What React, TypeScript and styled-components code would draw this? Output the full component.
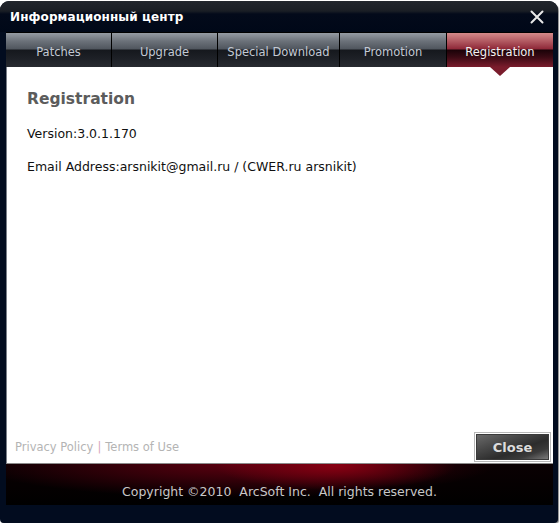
import React from "react";
import styled, { createGlobalStyle } from "styled-components";

const Global = createGlobalStyle`
  html, body { margin: 0; padding: 0; background: #ffffff; }
  body { font-family: "DejaVu Sans", Tahoma, sans-serif; }
`;

const Window = styled.div`
  width: 558px;
  height: 522px;
  margin: 1px 0 0 0;
  background: #020c1f;
  border-radius: 9px 9px 4px 4px;
  display: flex;
  flex-direction: column;
  box-shadow: 1px 1px 1px rgba(0, 0, 0, 0.45);
  overflow: hidden;
`;

const TitleBar = styled.div`
  height: 31px;
  flex: none;
  display: flex;
  align-items: center;
  justify-content: space-between;
  padding: 0 14px 0 10px;
  background: linear-gradient(180deg, #22262d 0px, #1a1e25 10px, #030a1a 13px, #000818 31px);
`;

const Title = styled.div`
  color: #ffffff;
  font-size: 12px;
  font-weight: bold;
  letter-spacing: 0.1px;
  padding-top: 1px;
`;

const CloseX = styled.svg`
  width: 14px;
  height: 14px;
  display: block;
`;

const Inner = styled.div`
  flex: 1;
  display: flex;
  flex-direction: column;
  margin: 0 5px 0 6px;
`;

const Tabs = styled.div`
  height: 35px;
  flex: none;
  display: flex;
  border-top: 1px solid #000000;
  box-sizing: border-box;
`;

const Tab = styled.div<{ $w: number; $active?: boolean }>`
  width: ${(p) => p.$w}px;
  flex: none;
  position: relative;
  display: flex;
  align-items: center;
  justify-content: center;
  padding-top: 3px;
  box-sizing: border-box;
  font-size: 11.5px;
  color: ${(p) => (p.$active ? "#f4f0f0" : "#c3c9d4")};
  border-right: 1px solid #000000;
  background: ${(p) =>
    p.$active
      ? "linear-gradient(180deg, #d48a8a 0px, #b25a62 8px, #8e2838 16px, #1a0208 17px, #3a0a14 24px, #7a1c2c 34px)"
      : "linear-gradient(180deg, #959ba3 0px, #6c727a 8px, #50565e 16px, #15181d 17px, #1d2026 25px, #272a30 34px)"};
  &:last-child { border-right: none; }
`;

const Arrow = styled.div`
  position: absolute;
  left: 50%;
  bottom: -9px;
  margin-left: -10px;
  width: 0;
  height: 0;
  border-left: 10px solid transparent;
  border-right: 10px solid transparent;
  border-top: 9px solid #7a1c2c;
  z-index: 2;
`;

const Content = styled.div`
  flex: none;
  height: 397px;
  background: #ffffff;
  border-left: 1px solid #7a7f88;
  border-bottom: 1px solid #8a8a8a;
  box-sizing: border-box;
  display: flex;
  flex-direction: column;
  padding: 23px 0 0 20px;
  position: relative;
`;

const Heading = styled.h1`
  margin: 0;
  font-size: 15.5px;
  font-weight: bold;
  color: #5c5c5c;
`;

const Line = styled.p<{ $top: number }>`
  margin: ${(p) => p.$top}px 0 0 0;
  font-size: 12.5px;
  color: #101010;
`;

const Spacer = styled.div`
  flex: 1;
`;

const BottomRow = styled.div`
  display: flex;
  align-items: center;
  justify-content: space-between;
  padding: 0 2px 0 0;
  margin-left: -12px;
  height: 32px;
`;

const Links = styled.div`
  font-size: 11.5px;
  color: #b4b4b4;
`;

const Sep = styled.span`
  color: #d9a7bd;
  margin: 0 4px;
`;

const CloseButton = styled.button`
  width: 77px;
  height: 30px;
  border: 1px solid #b8b8b8;
  padding: 0;
  box-sizing: border-box;
  background: #ffffff;
  cursor: pointer;
  display: flex;
  padding: 1px;
`;

const CloseInner = styled.span`
  flex: 1;
  display: flex;
  align-items: center;
  justify-content: center;
  font-family: "DejaVu Sans", Tahoma, sans-serif;
  font-size: 13px;
  font-weight: bold;
  color: #dcdcdc;
  border: 1px solid #3a3a3a;
  background: linear-gradient(160deg, #6a6a6a 0%, #4a4a4a 30%, #2c2c2c 60%, #3a3a3a 78%, #7a7a7a 100%);
`;

const Footer = styled.div`
  height: 41px;
  flex: none;
  display: flex;
  align-items: center;
  justify-content: center;
  color: #c8c8c8;
  font-size: 12.5px;
  background:
    radial-gradient(ellipse 120px 24px at 330px 2px, rgba(150, 0, 20, 0.85), rgba(150, 0, 20, 0) 100%),
    radial-gradient(ellipse 260px 34px at 230px 0px, rgba(95, 0, 16, 0.95), rgba(95, 0, 16, 0) 100%),
    linear-gradient(180deg, #0a0002 0%, #000000 100%);
  padding-top: 14px;
  box-sizing: border-box;
`;

const tabs = [
  { label: "Patches", w: 106 },
  { label: "Upgrade", w: 106 },
  { label: "Special Download", w: 122 },
  { label: "Promotion", w: 107 },
  { label: "Registration", w: 106, active: true },
];

export default function App() {
  return (
    <>
      <Global />
      <Window>
        <TitleBar>
          <Title>Информационный центр</Title>
          <CloseX viewBox="0 0 14 14">
            <path d="M1.5 1.5 L12.5 12.5 M12.5 1.5 L1.5 12.5" stroke="#e8e8e8" strokeWidth="2" strokeLinecap="round" />
          </CloseX>
        </TitleBar>
        <Inner>
          <Tabs>
            {tabs.map((t) => (
              <Tab key={t.label} $w={t.w} $active={t.active}>
                {t.label}
                {t.active && <Arrow />}
              </Tab>
            ))}
          </Tabs>
          <Content>
            <Heading>Registration</Heading>
            <Line $top={18}>Version:3.0.1.170</Line>
            <Line $top={18}>Email Address:arsnikit@gmail.ru / (CWER.ru arsnikit)</Line>
            <Spacer />
            <BottomRow>
              <Links>
                Privacy Policy<Sep>|</Sep>Terms of Use
              </Links>
              <CloseButton>
                <CloseInner>Close</CloseInner>
              </CloseButton>
            </BottomRow>
          </Content>
          <Footer>Copyright ©2010&nbsp; ArcSoft Inc.&nbsp; All rights reserved.</Footer>
        </Inner>
      </Window>
    </>
  );
}
